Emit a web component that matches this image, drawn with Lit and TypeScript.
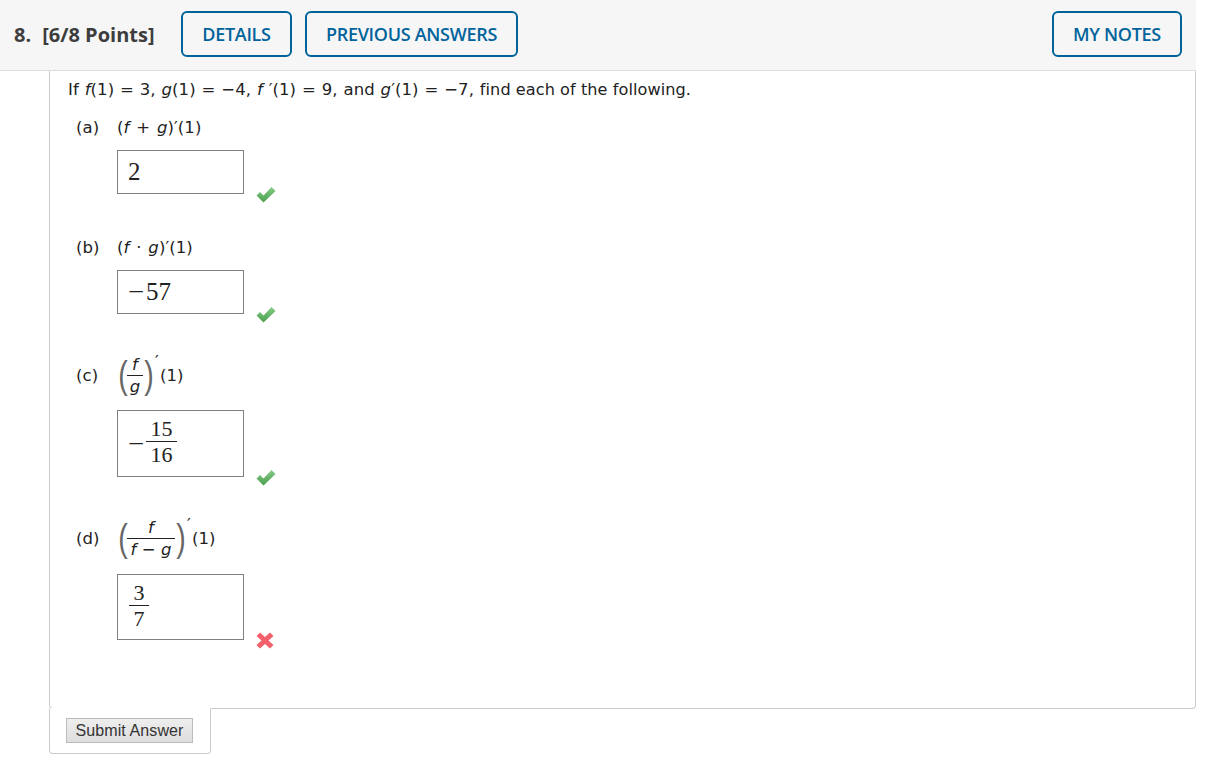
import { LitElement, html, css } from "lit";
import { customElement } from "lit/decorators.js";

const check = html`<svg class="mark" width="20" height="17" viewBox="0 0 20 17"><defs><linearGradient id="g" x1="0" y1="0" x2="0" y2="1"><stop offset="0" stop-color="#86cc86"/><stop offset="1" stop-color="#4a9e50"/></linearGradient></defs><path d="M0.5 9.5 L4 6 L7.5 9.5 L15.5 1 L19.5 5 L7.5 16.5 Z" fill="url(#g)"/></svg>`;
const cross = html`<svg class="mark" width="18" height="17" viewBox="0 0 18 17"><path d="M0.5 4 L4 0.5 L9 5 L14 0.5 L17.5 4 L12.5 8.5 L17.5 13 L14 16.5 L9 12 L4 16.5 L0.5 13 L5.5 8.5 Z" fill="#f2606c"/></svg>`;

@customElement("app-root")
export class AppRoot extends LitElement {
  static styles = css`
    :host { display: block; width: 1196px; height: 775px; font-family: "DejaVu Sans", Verdana, sans-serif; font-size: 16.5px; letter-spacing: 0.07px; color: #222; background: #fff; }
    .head { height: 71px; box-sizing: border-box; background: #f6f6f6; border-bottom: 1px solid #ddd; display: flex; align-items: center; padding: 0 14px 3px 14px; gap: 13px; font-family: "Open Sans", sans-serif; letter-spacing: 0; }
    .title { font-size: 20px; font-weight: 700; color: #3d3d3d; display: flex; gap: 11px; width: 154px; padding-top: 1px; white-space: nowrap; }
    .btn { height: 46px; box-sizing: border-box; border: 2px solid #00639c; border-radius: 6px; background: #f6f6f6; color: #00639c; font-size: 18px; font-weight: 600; display: flex; align-items: center; justify-content: center; letter-spacing: -0.3px; }
    .details { width: 111px; }
    .prev { width: 213px; }
    .notes { width: 130px; margin-left: auto; }
    .panel { margin-left: 49px; height: 638px; box-sizing: border-box; border: 1px solid #ccc; border-top: 0; border-radius: 0 0 4px 4px; padding: 8px 0 0 18px; position: relative; }
    .q { height: 22px; line-height: 22px; margin-bottom: 15px; white-space: nowrap; word-spacing: 0.55px; }
    .prose { font-size: 16.1px; word-spacing: 0; }
    .part { display: flex; align-items: center; height: 22px; margin-left: 8px; white-space: nowrap; }
    .expr { word-spacing: 1.5px; }
    .gap-b { margin-top: 42px; }
    .gap-c { margin-top: 50px; }
    .lbl { width: 41px; }
    i { font-style: italic; }
    .ans { margin: 12px 0 0 49px; display: flex; align-items: flex-end; gap: 12px; }
    .ans-c { margin-top: 24px; }
    .ans-d { margin-top: 25px; }
    .box { width: 127px; height: 44px; box-sizing: border-box; border: 1px solid #808080; display: flex; align-items: center; padding-left: 10px; font-family: "Liberation Serif", serif; font-size: 25px; letter-spacing: 0; color: #222; }
    .box-c { height: 67px; }
    .box-d { height: 66px; }
    .minus { display: inline-block; transform: scaleX(1.15); transform-origin: left center; margin-right: 4px; }
    .mark { margin-bottom: -9px; flex: none; }
    .frac { display: inline-flex; flex-direction: column; align-items: center; line-height: 1; }
    .frac > span:first-child { border-bottom: 1px solid #222; }
    .frac > span { display: block; text-align: center; width: 100%; }
    .mfrac { margin-bottom: 2px; }
    .mfrac > span { font-size: 22px; line-height: 26px; }
    .mfrac > span:first-child { line-height: 24px; }
    .mfrac-c { width: 31px; }
    .mfrac-d { width: 20px; margin-left: 1px; }
    .sfrac > span { line-height: 21px; height: 21px; }
    .sfrac-c { width: 16px; }
    .sfrac-d { width: 48px; }
    .paren { font-family: "Liberation Sans", sans-serif; font-size: 38px; color: #666; line-height: 38px; transform: scaleX(.75); display: inline-block; width: 10px; text-align: center; }
    .prime { align-self: flex-start; margin: -12px 0 0 2px; width: 5px; }
    .math { display: flex; align-items: center; height: 22px; }
    .tab { position: absolute; left: -1px; top: 637px; width: 162px; height: 46px; box-sizing: border-box; background: #fff; border: 1px solid #ccc; border-top: 1px solid #fff; border-radius: 0 0 4px 4px; padding: 9px 0 0 16px; }
    .submit { display: block; width: 127px; height: 25px; box-sizing: border-box; padding: 0; border: 1px solid #bbb; border-radius: 0; background: linear-gradient(#eee, #ddd); font-family: "Liberation Sans", sans-serif; font-size: 16px; letter-spacing: 0.1px; color: #333; }
  `;
  render() {
    return html`
      <div class="head">
        <div class="title"><span>8.</span><span>[6/8 Points]</span></div>
        <div class="btn details">DETAILS</div>
        <div class="btn prev">PREVIOUS ANSWERS</div>
        <div class="btn notes">MY NOTES</div>
      </div>
      <div class="panel">
        <div class="q">If <i>f</i>(1) = 3, <i>g</i>(1) = −4, <i>f</i> ′(1) = 9, and <i>g</i>′(1) = −7, <span class="prose">find each of the following.</span></div>

        <div class="part"><span class="lbl">(a)</span><span class="expr">(<i>f</i> + <i>g</i>)′(1)</span></div>
        <div class="ans"><div class="box">2</div>${check}</div>

        <div class="part gap-b"><span class="lbl">(b)</span><span class="expr">(<i>f</i> · <i>g</i>)′(1)</span></div>
        <div class="ans"><div class="box"><span class="minus">−</span>57</div>${check}</div>

        <div class="part gap-c"><span class="lbl">(c)</span><span class="math"><span class="paren">(</span><span class="frac sfrac sfrac-c"><span><i>f</i></span><span><i>g</i></span></span><span class="paren">)</span><span class="prime">′</span><span>(1)</span></span></div>
        <div class="ans ans-c"><div class="box box-c"><span class="minus">−</span><span class="frac mfrac mfrac-c"><span>15</span><span>16</span></span></div>${check}</div>

        <div class="part gap-c"><span class="lbl">(d)</span><span class="math"><span class="paren">(</span><span class="frac sfrac sfrac-d"><span><i>f</i></span><span><i>f</i> − <i>g</i></span></span><span class="paren">)</span><span class="prime">′</span><span>(1)</span></span></div>
        <div class="ans ans-d"><div class="box box-d"><span class="frac mfrac mfrac-d"><span>3</span><span>7</span></span></div>${cross}</div>

        <div class="tab"><button class="submit">Submit Answer</button></div>
      </div>
    `;
  }
}
